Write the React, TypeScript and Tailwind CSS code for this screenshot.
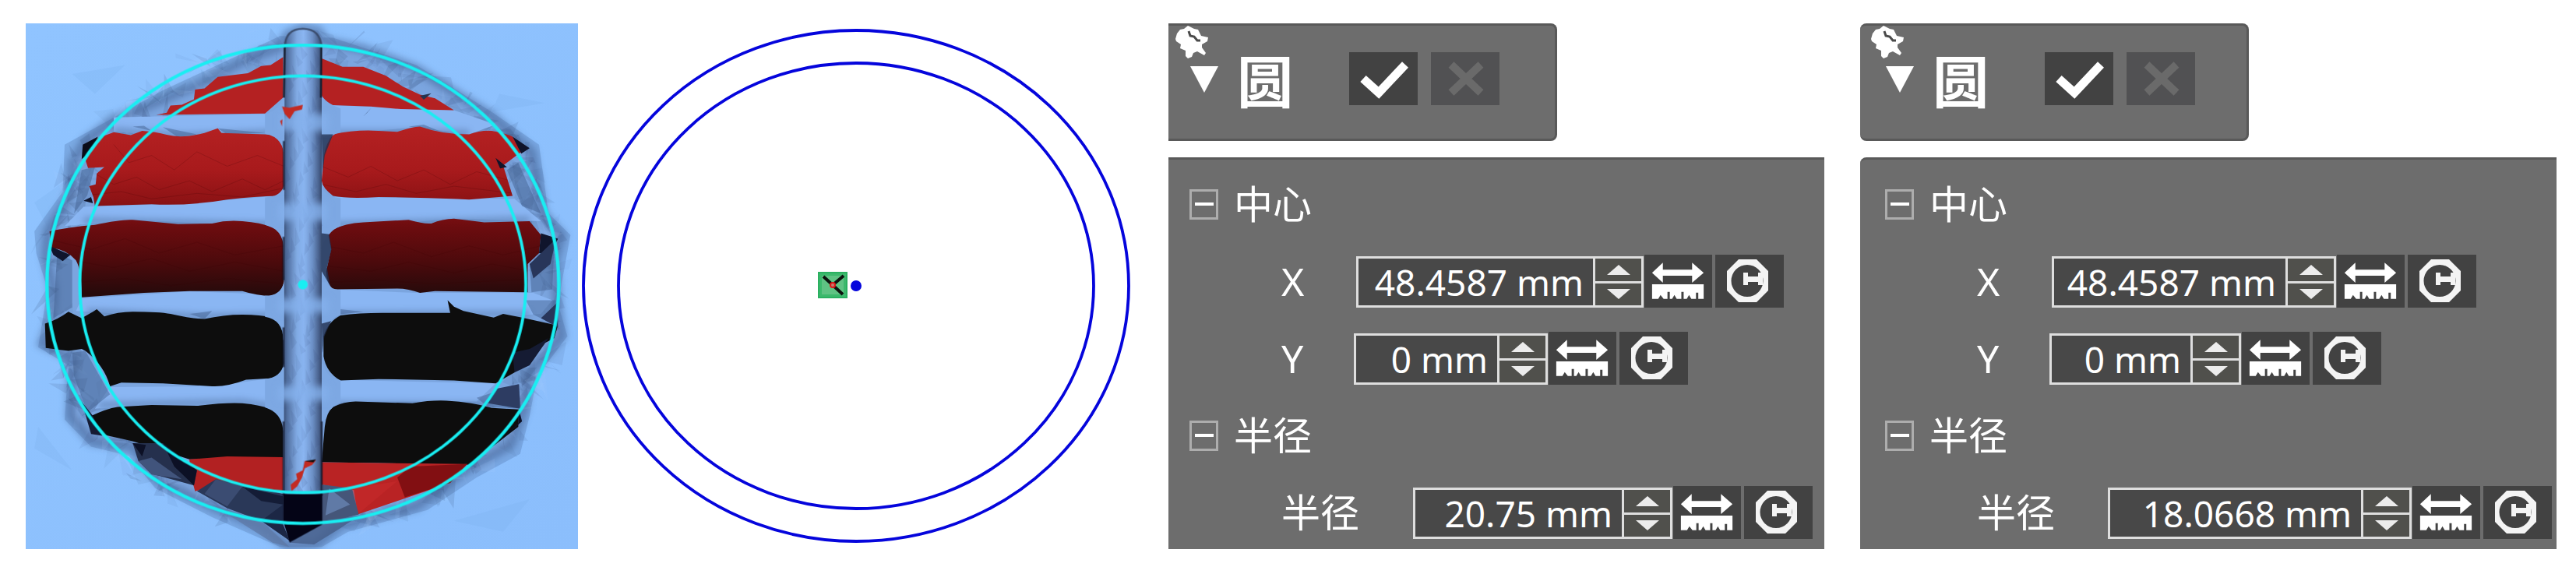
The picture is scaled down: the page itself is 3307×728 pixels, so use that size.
import { useId } from "react";

interface FieldProps {
  label: string;
  value: string;
  labelClass: string;
  fieldClass: string;
}

interface PanelProps {
  className: string;
  indentClass: string;
  headerClass: string;
  bodyClass: string;
  center: FieldProps[];
  radius: FieldProps[];
}

const RED_HOLES = [
  "M748 158L715 180L690 183L655 203L600 210L575 213L540 245L515 248L512 275L480 290L450 292L440 312L412 318L700 314L748 270Z",
  "M850 162L905 185L960 185L1020 210L1065 240L1110 262L1150 272L1200 305L1060 302L980 295L850 290Z",
  "M218 420L250 385L300 366L345 374L375 362Q410 364 440 373Q480 384 540 368L575 355L585 368L700 372Q735 374 748 390L750 520Q746 540 735 542Q670 544 600 552Q500 570 400 565L250 570L246 545L235 515L252 510L255 480L275 462L232 465Z",
  "M880 372Q940 358 1000 362L1050 365Q1090 350 1110 350Q1170 372 1240 372Q1270 360 1300 362Q1340 370 1355 378L1378 420L1330 458L1355 542L1240 552Q1100 545 1000 545Q920 550 880 542Q852 520 850 500L856 430Q862 395 880 372Z",
  "M130 640Q180 628 250 622Q320 606 350 608L470 620L560 618Q600 608 640 612Q690 616 715 628Q742 636 748 660L750 780Q744 812 715 818Q680 818 640 805L500 805L380 810L215 822Q216 750 200 720Q175 690 135 685Z",
  "M880 635Q910 618 960 615L1080 608Q1120 620 1140 618Q1170 606 1200 605Q1240 610 1280 615L1400 612L1430 650L1425 700L1395 730L1395 808L1150 805L1110 810Q1080 798 1050 798L880 800Q862 780 862 750L875 690L868 650Z",
];

const BLACK_HOLES = [
  "M118 895Q150 885 180 862L215 880L245 862L255 855L275 875Q310 862 350 862Q420 862 450 868Q510 882 540 882Q590 870 640 870Q690 870 715 878Q744 884 748 900L750 1010Q744 1040 715 1046L650 1050Q600 1070 560 1068L430 1060L320 1058L290 1068Q275 1010 225 970L215 965L180 970L120 962Z",
  "M900 872Q950 865 1010 865L1190 865L1183 830L1200 848L1225 860L1305 878L1330 868L1380 878L1475 900L1465 935L1400 970L1360 1030L1310 1060L1200 1052L1000 1048L900 1052Q862 1030 855 985L855 930Q866 890 900 872Z",
  "M240 1150Q280 1130 310 1125L400 1120L520 1122Q600 1112 640 1115Q690 1120 710 1130Q740 1140 748 1165L748 1265L500 1270L350 1220L265 1200Z",
  "M880 1125Q910 1110 940 1110L1090 1115Q1140 1106 1180 1108Q1250 1112 1300 1128L1372 1132L1370 1180L1240 1285L1000 1280L850 1278L858 1180Q862 1140 880 1125Z",
];

const OUTLINE =
  "M800 78L760 95L740 130L640 170L520 235L420 280L300 330L225 390L190 450L185 540L125 640L120 710L140 800L135 880L110 950L190 990L185 1150L240 1220L350 1235L420 1330L560 1400L690 1455L760 1512L835 1506L900 1450L1100 1400L1230 1300L1350 1230L1385 1130L1400 1030L1485 930L1475 850L1465 720L1485 650L1435 590L1405 420L1300 320L1100 190L960 135L860 115L840 85Z";

// Repeatable facets, so the mesh looks the same on every render
const makeFacets = (count: number, inner: number, outer: number, size: number) => {
  let seed = 41;
  const next = () => {
    seed = (seed * 1103515245 + 12345) % 2147483648;
    return seed / 2147483648;
  };
  return Array.from({ length: count }, () => {
    const angle = next() * Math.PI * 2;
    const r = inner + next() * (outer - inner);
    const cx = 799 + Math.cos(angle) * r;
    const cy = 790 + Math.sin(angle) * r * 0.98;
    const points = [0, 1, 2]
      .map(() => `${Math.round(cx + (next() - 0.5) * size)},${Math.round(cy + (next() - 0.5) * size)}`)
      .join(" ");
    return { points, opacity: 0.03 + next() * 0.09 };
  });
};

const rimFacets = makeFacets(420, 620, 695, 90);

const barFacets = Array.from({ length: 90 }, (_, i) => {
  const x = 755 + ((i * 37) % 84);
  const y = 110 + i * 14;
  return `M${x} ${y}l${8 + ((i * 13) % 14)} ${20 + ((i * 7) % 20)}l-14 ${10 + ((i * 5) % 12)}z`;
}).join("");

const MeshView = () => (
  <svg
    viewBox="67 65 1461 1453"
    preserveAspectRatio="none"
    className="block aspect-[709/675] w-full"
    role="img"
    aria-label="Mesh"
  >
    <defs>
      <linearGradient id="cavity" gradientUnits="userSpaceOnUse" x1="0" y1="350" x2="0" y2="830">
        <stop offset="0" stopColor="#b42122" />
        <stop offset="0.25" stopColor="#a81a1c" />
        <stop offset="0.42" stopColor="#8e1315" />
        <stop offset="0.58" stopColor="#6c0c0f" />
        <stop offset="0.78" stopColor="#4c0a0c" />
        <stop offset="0.96" stopColor="#270a0b" />
      </linearGradient>
      <linearGradient id="post" gradientUnits="userSpaceOnUse" x1="746" y1="0" x2="854" y2="0">
        <stop offset="0" stopColor="#33466a" />
        <stop offset="0.12" stopColor="#5270a0" />
        <stop offset="0.36" stopColor="#80a9e2" />
        <stop offset="0.52" stopColor="#8bb6f2" />
        <stop offset="0.74" stopColor="#6c90c6" />
        <stop offset="0.9" stopColor="#475f8a" />
        <stop offset="1" stopColor="#2b3a58" />
      </linearGradient>
      <linearGradient id="backdrop" x1="0" y1="0" x2="1" y2="1">
        <stop offset="0" stopColor="#90c4ff" />
        <stop offset="1" stopColor="#8bbefc" />
      </linearGradient>
      <filter id="soft" x="-20%" y="-20%" width="140%" height="140%">
        <feGaussianBlur stdDeviation="9" />
      </filter>
      <clipPath id="reds">
        {RED_HOLES.map((d) => (
          <path key={d} d={d} />
        ))}
      </clipPath>
    </defs>

    <rect x="67" y="65" width="1461" height="1453" fill="url(#backdrop)" />
    <path d="M190 205L330 180L250 260ZM90 560L200 480L130 640ZM1320 260L1440 285L1300 310ZM100 1180L190 1300L90 1240ZM1200 1440L1400 1380L1330 1470Z" fill="#7fb2f0" opacity="0.3" />
    <path d="M740 100L430 250L170 400L165 530L90 640L95 700L125 800L100 960L180 1010L170 1160L240 1235L340 1260L410 1350L560 1430L740 1512L850 1512L920 1470L1130 1410L1260 1320L1375 1255L1400 1150L1420 1040L1500 930L1475 840L1508 650L1450 590L1425 400L1300 310L1100 180L880 105Z" fill="#557bb3" opacity="0.35" />
    <path d={OUTLINE} fill="#7ba5df" />
    <path d={OUTLINE} fill="none" stroke="#3f5b8c" strokeWidth="26" opacity="0.5" filter="url(#soft)" />
    {rimFacets.map((facet, i) => (
      <polygon key={i} points={facet.points} fill={i % 4 === 0 ? "#b4d5ff" : "#1b2a50"} opacity={facet.opacity} />
    ))}

    {/* cross bars */}
    <g fill="#8ab6f3">
      <path d="M300 325L745 314L850 290L1200 305L1310 345L1240 372L1100 352L880 372L740 372L480 378L300 364Z" />
      <path d="M220 572L500 563L745 540L880 545L1360 550L1430 612L1200 604L880 635L740 628L350 608L170 625Z" />
      <path d="M215 825L500 806L745 815L880 800L1100 810L1410 810L1460 830L1430 868L1300 878L900 872L740 880L540 882L200 860Z" />
      <path d="M290 1070L560 1068L745 1042L880 1050L1310 1060L1260 1110L940 1110L740 1130L400 1120L250 1130Z" />
    </g>
    <g fill="none" stroke="#4f6f9f" strokeWidth="9" opacity="0.6" filter="url(#soft)">
      <path d="M300 362L480 376L745 366M880 368L1240 368M220 610L480 616L740 622M880 622L1400 608M230 862L540 876L740 872M880 870L1400 868M260 1120L640 1112L740 1128M880 1118L1300 1120" strokeWidth="16" />
    </g>
    <g fill="#3f5c8a" opacity="0.45">
      <path d="M350 350L400 362L380 348ZM430 352L520 372L470 380ZM575 355L700 368L600 372ZM1080 350L1160 362L1120 345ZM500 868L560 860L540 882ZM900 855L960 862L890 870Z" />
      <path d="M1340 470L1370 450L1430 590L1380 570ZM150 700L190 720L190 850L140 880ZM1400 735L1465 690L1460 800L1405 808ZM190 975L225 970L290 1090L230 1140L195 1040ZM1260 1100L1370 1062L1378 1130L1290 1125Z" />
      <path d="M215 470L250 462L230 540L195 590ZM1390 830L1470 830L1470 900L1410 870Z" />
    </g>

    {/* cavity seen between the bars */}
    {RED_HOLES.map((d) => (
      <path key={d} d={d} fill="url(#cavity)" />
    ))}
    <g clipPath="url(#reds)" fill="none" stroke="#3a0507" strokeWidth="2" opacity="0.2">
      <path d="M250 480L300 510L360 490L420 525L500 500L560 530L640 495L700 525L750 500M230 540L320 530L400 550L520 535L640 545L750 520M300 400L340 450L400 430L460 470L520 420L600 460L680 430L750 460" />
      <path d="M850 460L920 490L980 460L1050 500L1120 470L1190 510L1260 475L1350 500M850 510L940 530L1020 510L1100 535L1200 515L1360 535" />
      <path d="M140 665L240 690L330 660L420 700L520 670L620 705L750 680M190 720L300 740L400 715L500 750L620 725L750 750M215 780L330 770L450 790L600 770L750 785" />
      <path d="M860 680L960 700L1040 670L1140 710L1240 680L1330 705L1430 680M860 735L980 750L1080 725L1200 755L1300 730L1400 750M870 780L1000 775L1150 785L1400 772" />
    </g>
    {BLACK_HOLES.map((d) => (
      <path key={d} d={d} fill="#0d0d0d" />
    ))}
    <path d="M500 1270L600 1262L748 1264L748 1362L600 1335L515 1358L505 1320Z" fill="#b22122" />
    <path d="M850 1278L1235 1283L1190 1335L1050 1385L945 1422L935 1355L850 1340Z" fill="#b92324" />
    <path d="M1085 1290L1235 1283L1190 1335L1070 1375L1050 1320Z" fill="#820f12" />
    <path d="M850 1340L935 1350L1050 1330L945 1422Z" fill="#c7292b" opacity="0.6" />

    {/* deep shadows along the rim */}
    <path d="M350 1225L430 1225L520 1300L512 1342L400 1310L365 1275Z" fill="#25304d" />
    <path d="M430 1225L520 1300L512 1342L460 1290ZM350 1225L385 1230L375 1262Z" fill="#0c1025" />
    <path d="M365 1275L400 1265L480 1325L400 1312Z" fill="#41547c" />
    <path d="M520 1358L570 1325L748 1365L748 1450L690 1440L600 1405Z" fill="#2a3858" />
    <path d="M570 1325L640 1345L600 1400L540 1365Z" fill="#3b4c72" />
    <path d="M640 1345L748 1372L748 1395L690 1385Z" fill="#141c36" />
    <path d="M690 1440L748 1395L748 1450L765 1495Z" fill="#1c2745" />
    <path d="M852 1340L930 1350L948 1422L852 1448Z" fill="#455679" />
    <path d="M870 1350L925 1395L860 1425Z" fill="#607aa6" />
    <path d="M560 1395L690 1440L765 1512L720 1500Z" fill="#5d78a5" opacity="0.75" />
    <path d="M850 1440L950 1425L900 1460L830 1505L765 1500Z" fill="#48608c" opacity="0.85" />
    <path d="M218 400L258 378L235 425L215 440Z" fill="#0a0c18" />
    <path d="M1310 437L1340 462L1322 466ZM1355 378L1400 410L1378 425ZM220 555L240 545L245 562Z" fill="#10142a" />
    <path d="M1430 645L1475 660L1455 705L1425 700ZM130 680L185 705L165 722L140 705Z" fill="#10152c" />
    <path d="M1400 730L1470 660L1455 730L1410 770ZM1430 880L1475 835L1475 905Z" fill="#28365a" />
    <path d="M1355 975L1400 965L1450 935L1400 1010L1360 1030Z" fill="#151b33" />
    <path d="M1310 1075L1372 1062L1375 1130L1290 1115Z" fill="#2d3c62" />
    <path d="M215 1110L245 1150L270 1205L240 1200Z" fill="#151b33" />
    <path d="M1372 1132L1380 1165L1320 1220L1370 1170Z" fill="#0c1025" />
    <path d="M960 322L982 298L970 312ZM1110 265L1140 258L1120 276Z" fill="#26344f" />

    {/* vertical post, with a fillet where each bar meets it */}
    <g fill="#7da8e3">
      <path d="M700 316Q740 305 752 260H848Q858 285 900 300V366Q856 375 850 440H750Q752 380 700 370Z" />
      <path d="M700 546Q740 545 750 515H850Q858 545 900 548V625Q862 640 850 690H750Q748 632 700 622Z" />
      <path d="M700 818Q742 818 750 780H862Q868 798 900 802V870Q856 890 852 940H748Q748 884 700 876Z" />
      <path d="M700 1048Q742 1044 750 1005H854Q862 1045 900 1052V1114Q858 1130 852 1190H748Q744 1140 700 1126Z" />
    </g>
    <path d="M752 130Q754 80 800 80Q846 80 850 130V1370H750Z" fill="url(#post)" />
    <path d="M850 372L880 372L858 430L852 480ZM850 645L870 648L876 690L864 740L872 790L850 750ZM850 895L875 888L857 930L852 975Z" fill="#22304f" opacity="0.8" />
    <path d={barFacets} fill="#38507c" opacity="0.14" />
    <g filter="url(#soft)" fill="#85b0ec">
      <path d="M740 315H870V362H740ZM735 562H865V610H735ZM735 825H870V865H735ZM735 1068H870V1108H735Z" opacity="0.8" />
      <path d="M786 110L808 110L806 1250L788 1250Z" opacity="0.6" />
    </g>
    <path d="M752 130Q754 80 800 80Q846 80 850 130" fill="none" stroke="#3a4c6c" strokeWidth="5" />
    <path d="M752 130L750 270M849 130L848 270" stroke="#151c2c" strokeWidth="5" />
    <path d="M750 390V525M749 655V775M749 905V1015M749 1165V1370M850 1165V1370" stroke="#10162a" strokeWidth="6" opacity="0.7" />
    <path d="M745 295L765 298L800 290L798 303L778 308L765 330L752 315ZM740 335L746 330L745 350ZM770 1358L768 1340L785 1325L782 1310L800 1300L805 1275L835 1272L825 1285L805 1295L798 1320L785 1345Z" fill="#c22a22" />
    <path d="M805 1275L835 1270L828 1278Z" fill="#0d0d0d" />
    <path d="M748 1366H852V1450L765 1500L748 1440Z" fill="#040416" />

    {/* fitted circles */}
    <g fill="none" stroke="#19eef2">
      <ellipse cx="800" cy="786" rx="677" ry="661" strokeWidth="9" />
      <ellipse cx="800" cy="786" rx="590" ry="576" strokeWidth="8" />
    </g>
    <circle cx="800" cy="787" r="13" fill="#19eef2" />
  </svg>
);

const SketchView = () => (
  <svg viewBox="742 30 758 675" className="block w-full" role="img" aria-label="Sketch">
    <g fill="none" stroke="#0505dc" strokeWidth="3.8">
      <ellipse cx="1099" cy="367" rx="350" ry="328" />
      <ellipse cx="1099" cy="367" rx="305" ry="286" />
    </g>
    <circle cx="1099" cy="367" r="7" fill="#0505dc" />
    <rect x="1051" y="350" width="36" height="32" fill="#3cb96c" />
    <rect x="1055" y="354" width="28" height="24" fill="#5fc383" />
    <path d="M1051 350h36v32h-36z" fill="none" stroke="#2bb060" strokeWidth="2" />
    <path d="M1057 355L1069 366L1082 378M1069 366L1083 354" fill="none" stroke="#0b130d" strokeWidth="4" />
    <circle cx="1069" cy="366" r="3" fill="#c08070" stroke="#e01818" strokeWidth="2" />
  </svg>
);

const PinIcon = () => (
  <svg viewBox="0 0 43 42" className="block h-[42px] w-[43px]">
    <path
      d="M1 17L3 10L7 5L12 4L17 0L25 4L30 5L34 13L43 15L42 20L35 24L35 28L40 35L38 38L29 33L24 35L22 40L17 42L14 39L14 32L7 29L8 24L2 20Z"
      fill="#fff"
    />
    <path d="M18 7L20 13L25 14L29 19L33 19" fill="none" stroke="#4a4a4a" strokeWidth="3" />
  </svg>
);

const RulerIcon = () => (
  <svg viewBox="0 0 88 68" className="block h-full w-full">
    <path d="M10 23L24 10V19H62V10L77 23L62 36V27H24V36Z" fill="#fff" />
    <path d="M10 38H77V57H70V49H67V57H61L58 52L55 57H51V48H48V57H42L39 52L36 57H33V48H30V57H25L21 52L18 57H10Z" fill="#fff" />
  </svg>
);

const DialIcon = () => (
  <svg viewBox="0 0 88 68" className="block h-full w-full">
    <path
      fillRule="evenodd"
      d="M30 6H53L68 21V46L53 61H30L15 46V21ZM41 13A20 20 0 1 0 41 54A20 20 0 1 0 41 13Z"
      fill="#f4f4f4"
    />
    <path d="M36 23H42V28H55V23H61V39H55V35H42V39H36Z" fill="#f4f4f4" />
  </svg>
);

const Field = ({ label, value, labelClass, fieldClass }: FieldProps) => {
  const id = useId();
  return (
    <div className="flex h-[68px] items-end pl-[145px]">
      <label htmlFor={id} className={`flex h-[68px] shrink-0 items-center whitespace-nowrap ${labelClass}`}>
        {label}
      </label>
      <div className={`flex h-[66px] shrink-0 border-[3px] border-[#dedede] bg-[#484848] ${fieldClass}`}>
        <input
          id={id}
          defaultValue={value}
          className="min-w-0 flex-1 bg-transparent pr-3 text-right text-[46px] leading-[60px] text-white outline-none"
        />
        <div className="flex w-[62px] flex-col border-l-[3px] border-[#dedede] bg-[#50504c]">
          <button type="button" aria-label="Increase" className="flex flex-1 items-center justify-center border-b-[3px] border-[#dedede]">
            <svg viewBox="0 0 30 13" className="h-[13px] w-[30px]">
              <path d="M15 0L30 13H0Z" fill="#ececec" />
            </svg>
          </button>
          <button type="button" aria-label="Decrease" className="flex flex-1 items-center justify-center">
            <svg viewBox="0 0 30 13" className="h-[13px] w-[30px]">
              <path d="M0 0H30L15 13Z" fill="#ececec" />
            </svg>
          </button>
        </div>
      </div>
      <button type="button" aria-label="Measure" className="ml-px h-[68px] w-[87px] shrink-0 bg-[#424242]">
        <RulerIcon />
      </button>
      <button type="button" aria-label="Dimension" className="ml-1 h-[68px] w-[88px] shrink-0 bg-[#424242]">
        <DialIcon />
      </button>
    </div>
  );
};

const SectionTitle = ({ title }: { title: string }) => (
  <div className="flex h-[68px] items-center pl-[27px]">
    <button
      type="button"
      aria-label={title}
      className="flex h-[39px] w-[37px] items-center justify-center border-[3px] border-[#adadad]"
    >
      <span className="h-1 w-6 bg-white" />
    </button>
    <h2 className="ml-5">{title}</h2>
  </div>
);

const CirclePanel = ({ className, indentClass, headerClass, bodyClass, center, radius }: PanelProps) => (
  <section className={`min-w-0 text-[50px] leading-[64px] text-white ${className}`}>
    <header
      className={`flex h-[151px] w-[499px] items-start border-y-[3px] border-r-[3px] border-[#595959] bg-[#6d6d6d] ${indentClass} ${headerClass}`}
    >
      <div className="flex w-[88px] flex-col gap-2.5 pl-2">
        <PinIcon />
        <button type="button" aria-label="Toggle" className="ml-5 h-[34px] w-9">
          <svg viewBox="0 0 36 34" className="block h-full w-full">
            <path d="M0 0H36L18 34Z" fill="#fff" />
          </svg>
        </button>
      </div>
      <h1 className="mt-8 w-[144px] text-[72px] leading-[78px] font-bold">圆</h1>
      <button type="button" aria-label="OK" className="mt-[34px] h-[68px] w-[88px] bg-[#424242]">
        <svg viewBox="0 0 88 68" className="block h-full w-full">
          <path d="M18 34L38 52L72 16" fill="none" stroke="#fff" strokeWidth="11" />
        </svg>
      </button>
      <button type="button" aria-label="Cancel" disabled className="mt-[34px] ml-[17px] h-[68px] w-[88px] bg-[#515153]">
        <svg viewBox="0 0 88 68" className="block h-full w-full">
          <path d="M26 16L64 52M64 16L26 52" fill="none" stroke="#6a6a6a" strokeWidth="10" />
        </svg>
      </button>
    </header>
    <div
      className={`mt-[21px] flex flex-col gap-[31px] border-t-[3px] border-[#595959] bg-[#6d6d6d] pt-[23px] pb-[13px] ${indentClass} ${bodyClass}`}
    >
      <SectionTitle title="中心" />
      {center.map((field) => (
        <Field key={field.label} {...field} />
      ))}
      <SectionTitle title="半径" />
      {radius.map((field) => (
        <Field key={field.label} {...field} />
      ))}
    </div>
  </section>
);

const App = () => {
  return (
    <main className="flex items-start bg-white pt-[30px] pr-[25px] pb-[23px] pl-[33px] font-['Noto_Sans','Noto_Sans_CJK_SC',sans-serif]">
      <div className="min-w-0 flex-[709]">
        <MeshView />
      </div>
      <div className="min-w-0 flex-[758]">
        <SketchView />
      </div>
      <CirclePanel
        className="flex-[842]"
        indentClass="pl-0"
        headerClass="rounded-r-lg"
        bodyClass="rounded-none"
        center={[
          { label: "X", value: "48.4587 mm", labelClass: "w-24", fieldClass: "w-[369px]" },
          { label: "Y", value: "0 mm", labelClass: "w-[93px]", fieldClass: "w-[249px]" },
        ]}
        radius={[{ label: "半径", value: "20.75 mm", labelClass: "w-[169px]", fieldClass: "w-[333px]" }]}
      />
      <CirclePanel
        className="ml-[46px] flex-[894]"
        indentClass="pl-[5px]"
        headerClass="rounded-lg"
        bodyClass="rounded-tl-lg"
        center={[
          { label: "X", value: "48.4587 mm", labelClass: "w-24", fieldClass: "w-[365px]" },
          { label: "Y", value: "0 mm", labelClass: "w-[93px]", fieldClass: "w-[246px]" },
        ]}
        radius={[{ label: "半径", value: "18.0668 mm", labelClass: "w-[168px]", fieldClass: "w-[390px]" }]}
      />
    </main>
  );
};

export default App;
